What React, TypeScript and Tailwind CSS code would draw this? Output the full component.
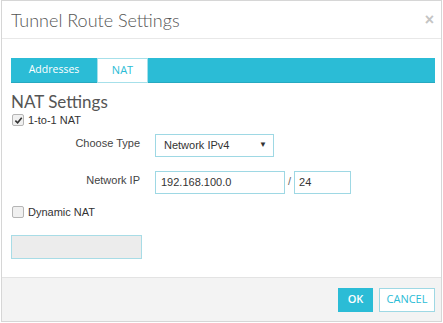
import React from "react";

const cyan = "#2bbcd6";

function Checkbox({ checked }: { checked?: boolean }) {
  return (
    <span className="flex h-[12px] w-[12px] items-center justify-center rounded-[2px] border border-[#b5b5b5] bg-[#f0f0f0]">
      {checked && (
        <svg width="9" height="9" viewBox="0 0 10 10" aria-hidden="true">
          <path d="M1.5 5.2 4 7.6 8.6 2" fill="none" stroke="#333" strokeWidth="1.8" />
        </svg>
      )}
    </span>
  );
}

export default function App() {
  return (
    <div className="h-[323px] w-[443px] bg-white font-['Liberation_Sans',Arial,sans-serif]">
      <div className="ml-[1px] flex h-[322px] w-[441px] flex-col border border-[#d6d6d6]">
        {/* Header */}
        <header className="flex h-[38px] items-center justify-between border-b border-[#e8e8e8] pl-[9px] pr-[7px]">
          <h1 className="font-['Lato',sans-serif] text-[18px] font-light text-[#555] pt-[1px]">
            Tunnel Route Settings
          </h1>
          <span className="text-[16px] font-bold leading-none text-[#c4c4c4]">×</span>
        </header>

        {/* Body */}
        <div className="flex-1 pl-[9px] pr-[10px] pt-[19px]">
          <div className="flex h-[25px] w-[424px] border-b border-[#27a9c0] bg-[#2bbcd6]">
            <div className="flex w-[86px] items-center justify-center font-['Open_Sans',sans-serif] text-[10.5px] font-medium text-white">
              Addresses
            </div>
            <div className="flex h-[25px] w-[51px] items-center justify-center border border-[#a6e0ea] bg-white font-['Open_Sans',sans-serif] text-[11px] text-[#2bbcd6]">
              NAT
            </div>
          </div>

          <h2 className="mt-[9px] font-['Lato',sans-serif] text-[17px] leading-[20px] text-[#555]">
            NAT Settings
          </h2>

          <label className="mt-0 flex items-center gap-[4px] pl-[1px] text-[11px] text-[#333]">
            <Checkbox checked />
            <span>1-to-1 NAT</span>
          </label>

          <div className="mt-[5px] grid grid-cols-[129px_auto] items-center gap-x-[15px] gap-y-[14px]">
            <span className="text-right text-[11px] text-[#444] -mt-[3px]">Choose Type</span>
            <div className="flex h-[23px] w-[119px] items-center justify-between border border-[#9ed8e4] pl-[8px] pr-[6px] text-[11px] text-[#333]">
              <span>Network IPv4</span>
              <span className="text-[8px]">▼</span>
            </div>

            <span className="text-right text-[11px] text-[#444] -mt-[3px]">Network IP</span>
            <div className="flex items-center gap-[3px]">
              <div className="flex h-[23px] w-[130px] items-center border border-[#9ed8e4] pl-[5px] text-[11px] text-[#333]">
                192.168.100.0
              </div>
              <span className="text-[11px] text-[#666] -mt-[2px]">/</span>
              <div className="flex h-[23px] w-[57px] items-center border border-[#9ed8e4] pl-[4px] text-[11px] text-[#333]">
                24
              </div>
            </div>
          </div>

          <label className="mt-[10px] flex items-center gap-[4px] pl-[1px] text-[11px] text-[#333]">
            <Checkbox />
            <span>Dynamic NAT</span>
          </label>

          <div className="mt-[15px] h-[24px] w-[131px] border border-[#a8dce6] bg-[#ececec]" />
        </div>

        {/* Footer */}
        <footer className="flex h-[44px] items-center justify-end gap-[6px] border-t border-[#e3e3e3] bg-[#f3f3f3] pr-[6px]">
          <button
            className="h-[24px] w-[35px] font-['Open_Sans',sans-serif] text-[11px] font-semibold text-white"
            style={{ backgroundColor: cyan }}
          >
            OK
          </button>
          <button className="h-[24px] w-[56px] border border-[#9ed8e4] bg-white font-['Open_Sans',sans-serif] text-[11px] text-[#2bbcd6]">
            CANCEL
          </button>
        </footer>
      </div>
    </div>
  );
}
